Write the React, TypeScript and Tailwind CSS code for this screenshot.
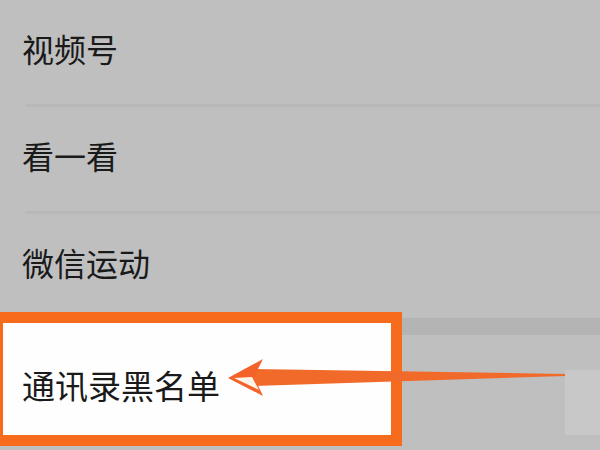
const rows = ["视频号", "看一看", "微信运动"];

export default function App() {
  return (
    <div
      className="relative h-[450px] w-[600px] overflow-hidden bg-[#bfbfbf] text-[#1a1a1a]"
      style={{ fontFamily: '"Noto Sans CJK SC", "Noto Sans", sans-serif' }}
    >
      {/* 设置列表 */}
      <div className="flex flex-col">
        {rows.map((label, i) => (
          <div key={label} className="pl-[22px]">
            <div className="flex h-[104px] items-center pb-[8px] text-[32px] leading-none">
              {label}
            </div>
            {i < rows.length - 1 && <div className="ml-[3px] h-[3px] bg-[#b8b8b8]" />}
          </div>
        ))}
        <div className="h-[17px] bg-[#b4b4b4]" />
        <div className="flex h-[108px] items-start justify-end bg-[#bfbfbf]">
          <div className="mt-[35px] h-[65px] w-[35px] bg-[#c8c8c8]" />
        </div>
      </div>

      {/* 标注框 */}
      <div className="absolute left-[-8px] top-[312px] flex h-[134px] w-[410px] items-center border-[11px] border-[#f76b1c] bg-[#fefefe] pl-[19px] pt-[12px] text-[33px] leading-none">
        通讯录黑名单
      </div>

      {/* 箭头 */}
      <svg className="absolute inset-0" width="600" height="450" viewBox="0 0 600 450">
        <polygon points="254,369 565,374 565,376 254,386" fill="#f26a2a" />
        <polygon points="228,378 263,359 254,377 263,396" fill="#f4622a" />
        <polygon points="234,378 252,377 259,390" fill="#fff3ea" />
      </svg>
    </div>
  );
}
